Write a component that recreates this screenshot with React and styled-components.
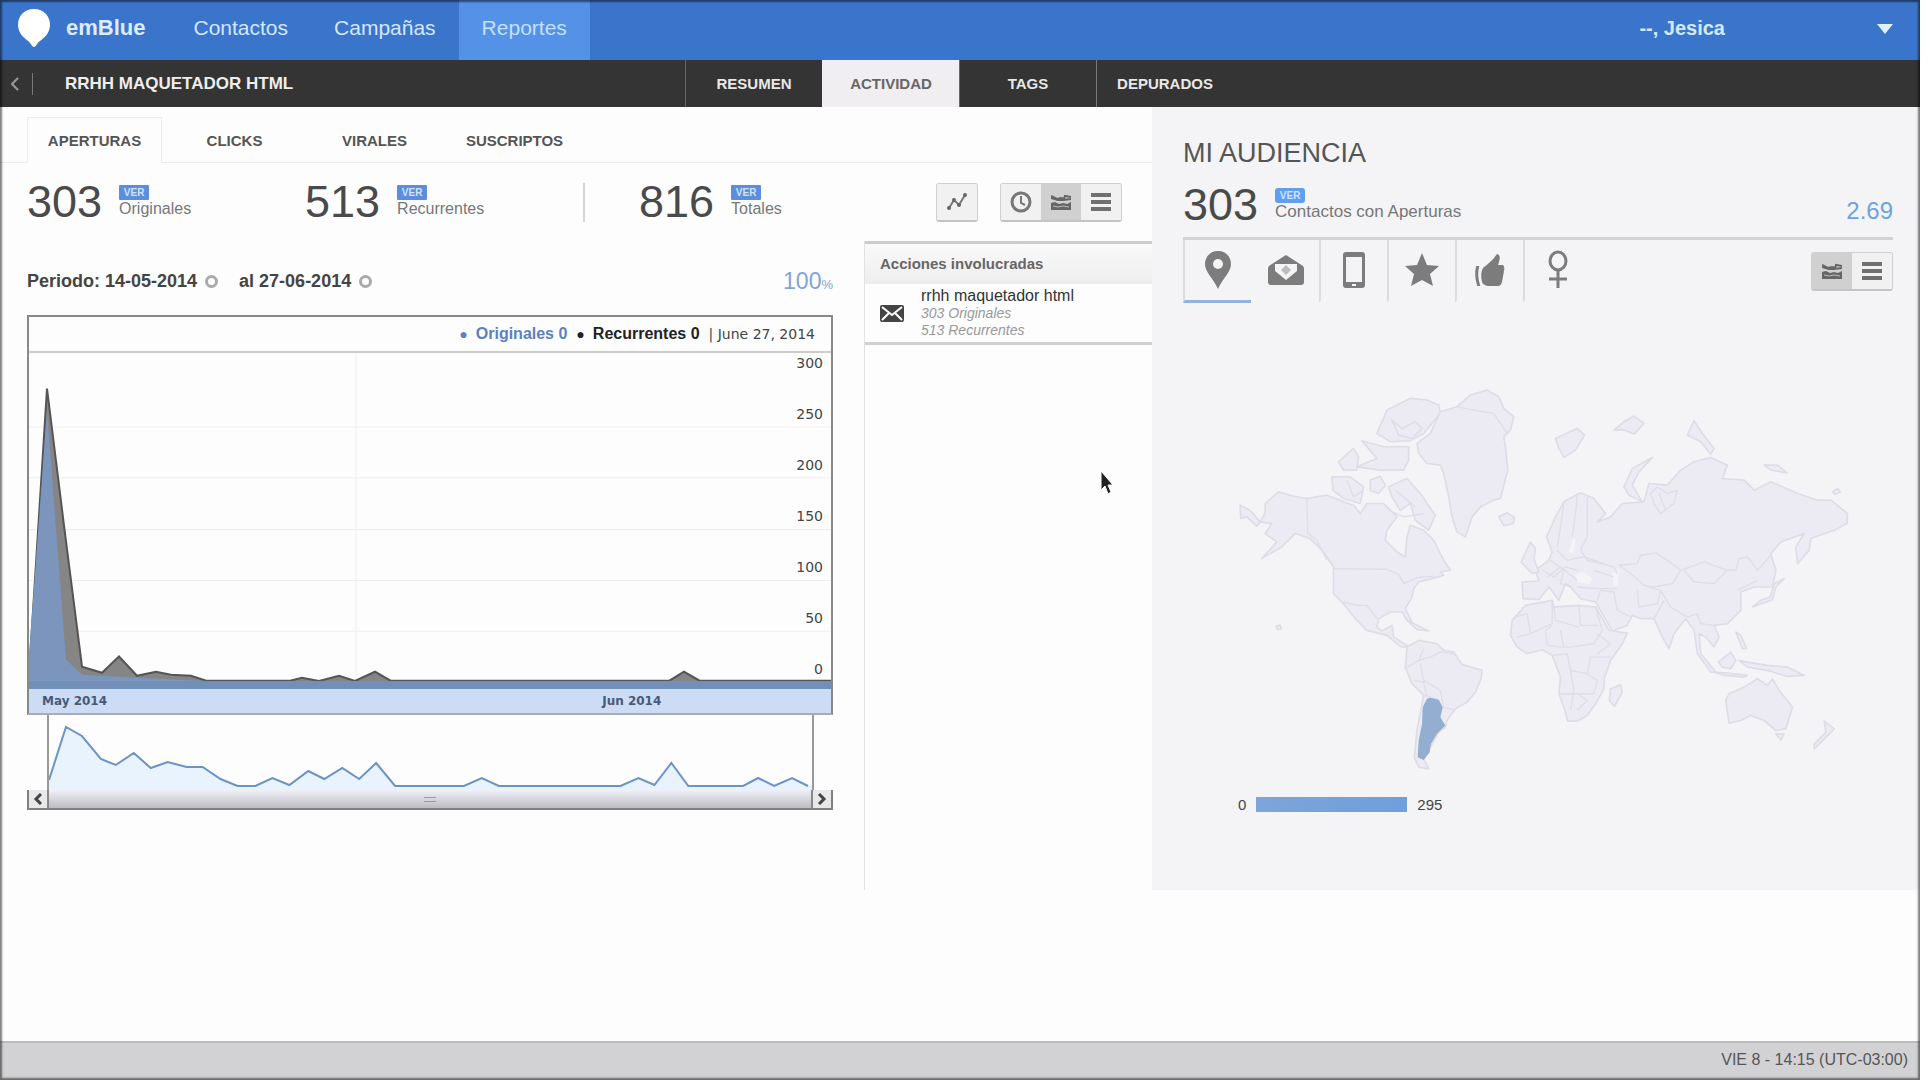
import { useState } from "react";
import styled, { createGlobalStyle } from "styled-components";

const scale = [300, 250, 200, 150, 100, 50, 0];

const sections = ["RESUMEN", "ACTIVIDAD", "TAGS", "DEPURADOS"];
const reports = ["APERTURAS", "CLICKS", "VIRALES", "SUSCRIPTOS"];

const stats = [
  { value: 303, label: "Originales" },
  { value: 513, label: "Recurrentes" },
  { value: 816, label: "Totales", divided: true },
];

function PinLogo() {
  return (
    <svg width="32" height="38" viewBox="0 0 32 38" aria-hidden="true">
      <path
        d="M16 0C6 0 0 7 0 16c0 8 6 13 10 16 3 2 4 6 6 6s3-4 6-6c4-3 10-8 10-16C32 7 26 0 16 0z"
        fill="#fff"
      />
    </svg>
  );
}

function TrendIcon() {
  return (
    <svg width="22" height="20" viewBox="0 0 22 20" aria-hidden="true">
      <path d="M3 16l5-8 5 5 6-10" fill="none" stroke="#777" strokeWidth="2" />
      <g fill="#666">
        <circle cx="3" cy="16" r="2" />
        <circle cx="8" cy="8" r="2" />
        <circle cx="13" cy="13" r="2" />
        <circle cx="19" cy="3" r="2" />
      </g>
    </svg>
  );
}

function ClockIcon() {
  return (
    <svg width="24" height="24" viewBox="0 0 24 24" aria-hidden="true">
      <circle cx="12" cy="12" r="9" fill="none" stroke="#777" strokeWidth="3" />
      <path d="M12 6v7l4 2" fill="none" stroke="#777" strokeWidth="2" />
    </svg>
  );
}

function AreaIcon() {
  return (
    <svg width="20" height="18" viewBox="0 0 20 18" aria-hidden="true">
      <path d="M0 10l4-1 4 2 4-1 4 1 4-2v8H0z" fill="#666" />
      <path
        d="M0 3l6 3 4-1 3 1 1-3 6 1M0 5l7 2h5l8-1"
        fill="none"
        stroke="#666"
        strokeWidth="2"
      />
      <path d="M2 13l5 1 5-1 6 1" fill="none" stroke="#bbb" strokeWidth="1" />
    </svg>
  );
}

function ListIcon() {
  return (
    <svg width="20" height="18" viewBox="0 0 20 18" aria-hidden="true">
      <path d="M0 2h20M0 9h20M0 16h20" stroke="#707070" strokeWidth="4" />
    </svg>
  );
}

function MailIcon() {
  return (
    <svg width="24" height="17" viewBox="0 0 24 17" aria-hidden="true">
      <rect width="24" height="17" rx="2" fill="#444" />
      <path
        d="M2 2l10 8 10-8M2 15l7-7M22 15l-7-7"
        fill="none"
        stroke="#fff"
        strokeWidth="2"
      />
    </svg>
  );
}

const audienceTabs = [
  {
    label: "Ubicación",
    icon: (
      <path
        fillRule="evenodd"
        d="M20 1C12 1 7 7 7 14c0 8 8 14 13 25 5-11 13-17 13-25C33 7 28 1 20 1zm0 8a5 5 0 110 10 5 5 0 010-10z"
      />
    ),
  },
  {
    label: "Correo",
    icon: (
      <>
        <path d="M20 5L37 16q1 1 1 3v13q0 3-3 3H5q-3 0-3-3V19q0-2 1-3z" />
        <path d="M9 14h22v7L20 30 9 21z" fill="#f4f4f6" />
        <path d="M20 15l5 5-5 5-5-5z" fill="#bbb" />
      </>
    ),
  },
  {
    label: "Dispositivo",
    icon: (
      <path
        fillRule="evenodd"
        d="M12 2h16q3 0 3 3v30q0 3-3 3H12q-3 0-3-3V5q0-3 3-3zm0 5v25h16V7zm6 27v2h4v-2z"
      />
    ),
  },
  {
    label: "Favoritos",
    icon: <path d="M20 3l5 12 12 1-9 8 3 12-11-6-11 6 3-12-9-8 12-1z" />,
  },
  {
    label: "Me gusta",
    icon: (
      <>
        <path d="M13 18c5-4 10-8 14-14 4 1 3 6 1 11h5q2 2 1 6l-2 11q-1 4-4 4H18q-5-1-6-4-2-9 1-14z" />
        <path d="M8 17H7q-2 8 1 18h1q-3-9-1-18z" stroke="#7c7c7c" strokeWidth="2" />
      </>
    ),
  },
  {
    label: "Género",
    icon: (
      <g fill="none" stroke="#7c7c7c" strokeWidth="3">
        <ellipse cx="20" cy="11" rx="8" ry="9" />
        <path d="M20 20v18M11 29h18" />
      </g>
    ),
  },
];

function WorldMap() {
  return (
    <MapSvg viewBox="-81 0 2127 1230" role="img" aria-label="Mapa de audiencia">
      <g className="land">
        <path d="M165 400L205 365L250 378L290 385L350 375L400 395L430 405L450 430L470 400L520 400L560 440L530 480L525 510L560 545L585 560L590 500L600 465L640 480L670 510L685 540L700 570L720 600L690 605L700 615L665 625L625 635L610 655L605 680L585 715L605 755L590 750L575 725L540 725L505 745L500 770L515 782L545 765L550 800L590 825L620 835L570 828L530 795L470 780L435 745L400 700L370 670L370 590L340 545L300 505L255 490L215 530L155 565L200 515L165 490L185 460L150 455L165 430Z" />
        <path d="M90 405L110 415L125 425L150 455L140 468L110 440L92 445Z" />
        <path d="M500 190L530 120L600 85L650 90L685 105L690 130L640 190L600 212L540 215Z" />
        <path d="M545 150l30 25l40-20l20 20l-30 30l-40-10z" />
        <path d="M385 275L430 235L445 260L440 300L400 300Z" />
        <path d="M455 212L520 230L595 230L595 270L580 300L510 300L440 290L500 265Z" />
        <path d="M365 320L420 320L460 350L450 400L400 385L368 360Z" />
        <path d="M480 330L510 318L525 345L505 370L480 360Z" />
        <path d="M535 350L590 325L630 370L675 435L655 480L615 450L600 400L570 420L545 380Z" />
        <path d="M620 220L660 190L690 125L740 110L780 75L830 60L865 80L880 115L910 140L900 180L880 200L885 230L892 300L870 385L850 390L810 410L785 440L765 500L740 485L725 440L715 380L700 310L690 285L650 280L625 250Z" />
        <path d="M865 440L890 428L912 442L908 460L880 467Z" />
        <path d="M585 745L620 765L655 782L620 778Z" />
        <path d="M590 830L625 810L680 820L700 840L730 845L755 882L815 900L812 925L795 965L770 995L735 1015L710 1050L705 1070L685 1085L660 1130L640 1165L655 1195L625 1190L612 1160L620 1080L635 1000L640 975L605 940L585 890Z" />
        <path d="M198 768l12-4l4 12l-12 2z" />
      </g>
      <path
        className="active"
        d="M650 985L665 980L685 988L697 1010L690 1040L705 1065L680 1090L662 1120L658 1145L640 1168L622 1160L625 1110L635 1060L637 1010Z"
      />
      <g className="borders">
        <path d="M290 385L292 488L320 510L350 570" />
        <path d="M370 595L530 597L565 612L580 640L620 622L670 618" />
        <path d="M400 695L440 705L470 705L500 745" />
        <path d="M545 425L580 440L640 430M410 330l20 50l30-20M555 360l60 50M740 110l50 10l60 10l40 60" />
        <path d="M640 835L625 870L590 890M625 870L660 860L690 845L730 850M630 880L640 930L690 960L700 1010L735 1020M610 930L640 935L650 980M640 975L680 985" />
      </g>
      <g transform="translate(810 0)">
        <g className="land">
          <path d="M125 635L175 632L165 600L205 570L215 545L198 500L225 440L250 395L300 368L340 385L375 430L350 455L390 440L425 400L490 395L505 340L560 345L600 300L640 275L690 262L740 285L725 325L790 330L820 360L870 335L950 370L1010 390L1050 390L1100 430L1098 460L1060 480L990 505L985 540L950 580L945 530L970 490L900 515L870 550L885 600L875 650L820 650L780 665L780 720L740 760L700 765L715 800L700 830L675 800L655 790L660 850L705 905L690 905L650 850L640 780L615 745L580 790L565 835L545 800L520 745L480 745L455 735L440 765L395 782L365 730L345 695L300 685L270 650L255 640L235 690L205 650L175 688L128 685Z" />
          <path d="M135 705L215 690L220 710L290 705L345 710L385 780L440 788L425 820L390 870L372 920L370 955L345 1000L320 1035L290 1052L262 1052L250 1010L235 970L240 920L215 855L185 838L140 850L110 830L90 795L95 750Z" />
          <path d="M390 955L420 943L425 965L402 1008L386 990Z" />
          <path d="M122 575L150 515L165 535L160 565L175 605L155 610Z" />
          <path d="M225 205L290 175L312 195L285 240L250 262L235 235Z" />
          <path d="M400 180L430 155L460 138L490 160L460 192L430 180Z" />
          <path d="M620 195L640 152L665 190L700 235L690 252L660 215Z" />
          <path d="M430 350L455 295L515 262L475 305L455 345L485 395L445 375Z" />
          <path d="M850 285L890 285L918 308L870 300Z" />
          <path d="M1055 365l15-10l8 10l-15 8z" />
          <path d="M815 710L840 690L868 680L880 640L910 625L885 650L875 688Z" />
          <path d="M765 785L780 795L798 835L785 835Z" />
          <path d="M712 875L750 845L765 870L750 895L725 890Z" />
          <path d="M700 905L740 908L800 915L790 920L730 915Z" />
          <path d="M775 870L800 875L860 885L920 890L970 915L920 918L860 900L800 890Z" />
          <path d="M735 990L745 970L790 950L830 925L860 945L875 925L895 960L935 1010L915 1075L885 1080L850 1050L810 1035L780 1050L745 1058Z" />
          <path d="M885 1090h25l-10 18z" />
          <path d="M1030 1052L1060 1075L1030 1105L1000 1135L1000 1120L1035 1085Z" />
        </g>
        <g className="sea">
          <path d="M285 612L310 605L335 625L325 642L290 635Z" />
          <path d="M275 510L285 500L280 550L265 545Z" />
          <path d="M395 610L415 600L412 640L400 650Z" />
        </g>
        <g className="borders">
          <path d="M250 400L240 470L230 530M290 375L285 430L275 500M320 380L320 500L300 540L320 570L400 590L410 610M310 560L370 580" />
          <path d="M415 585L470 580L480 555L525 548L560 570L600 600L575 640L520 650L490 645L450 610L415 585M600 600L670 575L740 600L700 640L640 635L610 600M740 600L765 600L775 565L800 560L830 600L870 555M770 660L830 630" />
          <path d="M210 570L250 600L240 640L270 650M185 600L220 620L255 590L290 600M230 540L260 570L310 560M200 620l40-30l50 40M290 650L350 655L410 655M340 600L400 620M350 690L360 660L400 665L410 720L450 740M470 660L475 710L530 700L540 660L500 650M540 660L570 710L620 740L650 730L660 760L700 765M520 745L550 690" />
          <path d="M215 690L215 760L150 790M220 710L225 750L295 770M295 705L300 765L350 765M345 710L365 780L340 820L270 830L240 830L200 825L195 780L215 765M240 780L250 830M105 740L140 730L150 790L110 800M215 855L260 850L270 900L320 910L330 860L390 860M320 910L350 930L340 970L290 970L240 970M270 900L280 960L270 1020M290 970L320 990L290 1020M350 790L390 820L350 850" />
          <path d="M510 370l20-20l30 20l30-10l-10 40l-40 30l-20-30zM535 370l20 50" />
        </g>
      </g>
    </MapSvg>
  );
}

function Chart() {
  return (
    <ChartBox>
      <Plot>
        <Legend>
          <LegendItem $color="#5b82bd">
            <span>●</span>Originales 0
          </LegendItem>
          <LegendItem $color="#222">
            <span>●</span>Recurrentes 0
          </LegendItem>
          <span>| June 27, 2014</span>
        </Legend>
        <PlotArea>
          <svg viewBox="30 353 802 331" preserveAspectRatio="none" aria-hidden="true">
            <path
              d="M30 426H832M30 476H832M30 527H832M30 577H832M30 627H832M357 353V684"
              stroke="#efefef"
              fill="none"
            />
            <path
              d="M30 684V670L48 388L65 523L83 662L103 668L120 652L138 671L157 667L172 670L192 671L208 676H290L303 673L320 676L340 671L356 676L376 667L392 676H670L685 667L701 676H832V684Z"
              fill="#858585"
              stroke="#555"
              strokeWidth="2"
            />
            <path
              d="M30 684V650L48 410L67 655L83 670L140 673L208 676H832V684Z"
              fill="#7b95bd"
            />
            <path d="M30 680H832" stroke="#7190b8" strokeWidth="8" />
          </svg>
          <Scale>
            {scale.map((n) => (
              <li key={n}>{n}</li>
            ))}
          </Scale>
        </PlotArea>
        <Months>
          <span>May 2014</span>
          <span>Jun 2014</span>
        </Months>
      </Plot>
      <Overview>
        <svg viewBox="49 708 765 75" preserveAspectRatio="none" aria-hidden="true">
          <path
            d="M49 773L66 720L82 729L101 752L116 758L134 746L151 761L168 755L187 760L203 760L221 772L238 779H256L273 771L290 778L309 764L325 772L343 761L360 772L377 756L396 779H465L483 771L500 779H622L640 771L656 778L673 756L690 779H745L760 771L776 779L794 771L810 779H814V783H49Z"
            fill="#e8f3fe"
          />
          <path
            d="M49 773L66 720L82 729L101 752L116 758L134 746L151 761L168 755L187 760L203 760L221 772L238 779H256L273 771L290 778L309 764L325 772L343 761L360 772L377 756L396 779H465L483 771L500 779H622L640 771L656 778L673 756L690 779H745L760 771L776 779L794 771L810 779"
            fill="none"
            stroke="#6b93c4"
            strokeWidth="2"
          />
        </svg>
      </Overview>
      <ScrollBar>
        <button type="button" aria-label="Anterior">
          <svg width="10" height="12" viewBox="0 0 10 12">
            <path d="M8 1L3 6l5 5" fill="none" stroke="#444" strokeWidth="3" />
          </svg>
        </button>
        <div className="thumb">
          <i />
        </div>
        <button type="button" aria-label="Siguiente">
          <svg width="10" height="12" viewBox="0 0 10 12">
            <path d="M2 1l5 5-5 5" fill="none" stroke="#444" strokeWidth="3" />
          </svg>
        </button>
      </ScrollBar>
    </ChartBox>
  );
}

function App() {
  const [section, setSection] = useState("ACTIVIDAD");
  const [report, setReport] = useState("APERTURAS");
  const [audience, setAudience] = useState("Ubicación");

  return (
    <Page>
      <GlobalStyle />
      <TopBar>
        <Brand href="#">
          <PinLogo />
          emBlue
        </Brand>
        <NavLink href="#">Contactos</NavLink>
        <NavLink href="#">Campañas</NavLink>
        <NavLink href="#" $active>
          Reportes
        </NavLink>
        <UserMenu type="button">
          --, Jesica
          <svg width="16" height="10" viewBox="0 0 16 10" aria-hidden="true">
            <path d="M0 0h16L8 10z" fill="#e3f1ff" />
          </svg>
        </UserMenu>
      </TopBar>

      <SectionBar>
        <Back type="button" aria-label="Volver">
          <svg width="8" height="14" viewBox="0 0 8 14">
            <path d="M7 1L1 7l6 6" fill="none" stroke="#999" strokeWidth="2" />
          </svg>
        </Back>
        <h1>RRHH MAQUETADOR HTML</h1>
        {sections.map((name) => (
          <SectionTab
            key={name}
            type="button"
            $active={name === section}
            onClick={() => setSection(name)}
          >
            {name}
          </SectionTab>
        ))}
      </SectionBar>

      <Content>
        <Activity>
          <ReportTabs>
            {reports.map((name) => (
              <ReportTab
                key={name}
                type="button"
                $active={name === report}
                onClick={() => setReport(name)}
              >
                {name}
              </ReportTab>
            ))}
          </ReportTabs>

          <StatsRow>
            {stats.map((s) => (
              <Stat key={s.label} $divided={s.divided}>
                <BigNumber>{s.value}</BigNumber>
                <StatText>
                  <Badge href="#">VER</Badge>
                  {s.label}
                </StatText>
              </Stat>
            ))}
            <Tools>
              <ButtonGroup>
                <button type="button" aria-label="Tendencia">
                  <TrendIcon />
                </button>
              </ButtonGroup>
              <ButtonGroup>
                <button type="button" aria-label="Horario">
                  <ClockIcon />
                </button>
                <button type="button" aria-label="Gráfico" aria-pressed="true">
                  <AreaIcon />
                </button>
                <button type="button" aria-label="Lista">
                  <ListIcon />
                </button>
              </ButtonGroup>
            </Tools>
          </StatsRow>

          <Columns>
            <ChartColumn>
              <Period>
                Periodo: 14-05-2014
                <button type="button" aria-label="Cambiar fecha de inicio" />
                <span>al 27-06-2014</span>
                <button type="button" aria-label="Cambiar fecha de fin" />
                <Percent>
                  100<small>%</small>
                </Percent>
              </Period>
              <Chart />
            </ChartColumn>
            <Actions>
              <h2>Acciones involucradas</h2>
              <ActionItem>
                <MailIcon />
                <div>
                  <p>rrhh maquetador html</p>
                  <em>303 Originales</em>
                  <em>513 Recurrentes</em>
                </div>
              </ActionItem>
            </Actions>
          </Columns>
        </Activity>

        <Audience>
          <h2>MI AUDIENCIA</h2>
          <AudienceStat>
            <BigNumber>303</BigNumber>
            <StatText $large>
              <Badge href="#" $bubble>
                VER
              </Badge>
              Contactos con Aperturas
            </StatText>
            <Ratio>2.69</Ratio>
          </AudienceStat>
          <AudienceBar>
            {audienceTabs.map((tab) => (
              <AudienceTab
                key={tab.label}
                type="button"
                aria-label={tab.label}
                $active={tab.label === audience}
                onClick={() => setAudience(tab.label)}
              >
                <svg width="40" height="40" viewBox="0 0 40 40" fill="#7c7c7c">
                  {tab.icon}
                </svg>
              </AudienceTab>
            ))}
            <ButtonGroup $end>
              <button type="button" aria-label="Gráfico" aria-pressed="true">
                <AreaIcon />
              </button>
              <button type="button" aria-label="Lista">
                <ListIcon />
              </button>
            </ButtonGroup>
          </AudienceBar>
          <WorldMap />
          <MapLegend>
            <span>0</span>
            <i />
            <span>295</span>
          </MapLegend>
        </Audience>
      </Content>

      <Footer>VIE 8 - 14:15 (UTC-03:00)</Footer>

      <Cursor viewBox="0 0 14 26" width="14" height="26" aria-hidden="true">
        <path
          d="M1 1v19l4-4 3 8 3-2-3-7h5z"
          fill="#222"
          stroke="#fff"
          strokeWidth="1"
        />
      </Cursor>
    </Page>
  );
}

export default App;

const GlobalStyle = createGlobalStyle`
  * {
    box-sizing: border-box;
  }

  body {
    margin: 0;
    background: #fff;
    font-family: "Liberation Sans", Arial, sans-serif;
    color: #444;
  }

  h1, h2, p, ul {
    margin: 0;
    padding: 0;
  }

  button {
    margin: 0;
    padding: 0;
    border: 0;
    background: none;
    font-family: inherit;
    cursor: pointer;
  }

  a {
    text-decoration: none;
  }

  svg {
    display: block;
  }
`;

const Page = styled.div`
  position: relative;
  display: flex;
  flex-direction: column;
  min-height: 100vh;
  margin-right: 10px;
  background: #fdfdfe;

  /* dark edge drawn over the whole window */
  &::after {
    content: "";
    position: absolute;
    inset: 0;
    box-shadow: inset 0 0 2px 2px rgba(0, 0, 0, 0.5);
    pointer-events: none;
  }
`;

const TopBar = styled.header`
  display: flex;
  height: 60px;
  padding: 0 27px 0 18px;
  background: #3a75cb;
`;

const Brand = styled.a`
  display: flex;
  align-items: center;
  gap: 16px;
  padding: 0 25px 5px 0;
  color: #dcecff;
  font-size: 22px;
  font-weight: bold;
`;

const NavLink = styled.a`
  display: flex;
  align-items: center;
  padding: 0 23px 5px;
  color: ${({ $active }) => ($active ? "#c4e0ff" : "#d4e7fd")};
  background: ${({ $active }) => ($active ? "#5591e6" : "none")};
  font-size: 21px;
`;

const UserMenu = styled.button`
  display: flex;
  align-items: center;
  gap: 152px;
  margin-left: auto;
  padding-bottom: 3px;
  color: #d4e9ff;
  font-size: 20px;
  font-weight: bold;
`;

const SectionBar = styled.nav`
  display: flex;
  height: 47px;
  background: #343434;

  h1 {
    width: 652px;
    padding-left: 32px;
    color: #eee;
    font-size: 17px;
    line-height: 47px;
  }
`;

const Back = styled.button`
  display: flex;
  align-items: center;
  align-self: center;
  width: 33px;
  height: 22px;
  padding-left: 11px;
  border-right: 1px solid #777;
`;

const SectionTab = styled.button`
  width: 137px;
  border-left: 1px solid #666;
  color: #e8e8e8;
  font-size: 15px;
  font-weight: bold;

  &:last-child {
    border-left-color: #777;
  }

  ${({ $active }) =>
    $active &&
    `
    background: #f0eef0;
    color: #666;
    border-left-color: #f0eef0;
  `}
`;

const Content = styled.main`
  display: flex;
`;

const Activity = styled.section`
  display: flex;
  flex-direction: column;
  width: 60%;
`;

const ReportTabs = styled.div`
  display: flex;
  gap: 5px;
  padding: 10px 0 0 27px;
  border-bottom: 1px solid #ececee;
`;

const ReportTab = styled.button`
  width: 135px;
  height: 46px;
  margin-bottom: -1px;
  border: 1px solid ${({ $active }) => ($active ? "#ececee" : "transparent")};
  border-bottom-color: ${({ $active }) => ($active ? "#fdfdfe" : "transparent")};
  color: #555;
  font-size: 15px;
  font-weight: bold;
`;

const StatsRow = styled.div`
  display: flex;
  align-items: center;
  height: 78px;
  padding: 0 30px 0 27px;
`;

const Stat = styled.div`
  display: flex;
  align-items: center;
  gap: 17px;
  width: 278px;
  height: 39px;

  ${({ $divided }) =>
    $divided &&
    `
    width: auto;
    padding-left: 54px;
    border-left: 2px solid #d5d5d5;
  `}
`;

const BigNumber = styled.strong`
  color: #4a4a4a;
  font-size: 45px;
  font-weight: normal;
  line-height: 40px;
`;

const StatText = styled.div`
  display: flex;
  flex-direction: column;
  align-items: flex-start;
  padding-bottom: 1px;
  color: #777;
  font-size: ${({ $large }) => ($large ? "17px" : "16px")};
  line-height: 18px;
`;

const Badge = styled.a`
  width: 30px;
  height: 15px;
  border-radius: ${({ $bubble }) => ($bubble ? "3px" : "1px")};
  background: ${({ $bubble }) => ($bubble ? "#5f9fee" : "#5b8edd")};
  color: #cfe3ff;
  font-size: 10px;
  font-weight: bold;
  line-height: 15px;
  text-align: center;
`;

const Tools = styled.div`
  display: flex;
  gap: 22px;
  margin-left: auto;
`;

const ButtonGroup = styled.div`
  display: flex;
  align-items: stretch;
  height: 39px;
  border: 1px solid #cfcfcf;
  border-bottom: 2px solid #c4c4c4;
  border-radius: 3px;
  overflow: hidden;
  ${({ $end }) => $end && "margin: 12px 0 0 auto;"}

  button {
    display: flex;
    align-items: center;
    justify-content: center;
    width: 40px;
    background: #f1f1f2;
  }

  button[aria-pressed="true"] {
    background: #d0d0d1;
  }
`;

const Columns = styled.div`
  display: flex;
  flex: 1;
`;

const ChartColumn = styled.div`
  flex: 1;
  padding: 0 31px 80px 27px;
`;

const Period = styled.div`
  display: flex;
  align-items: center;
  height: 74px;
  padding-top: 6px;
  font-size: 18px;
  font-weight: bold;

  button {
    width: 13px;
    height: 13px;
    margin: 0 21px 0 8px;
    border: 3px solid #aaa;
    border-radius: 50%;
  }
`;

const Percent = styled.span`
  margin-left: auto;
  color: #7da5da;
  font-size: 23px;
  font-weight: normal;

  small {
    font-size: 13px;
  }
`;

const ChartBox = styled.div`
  font-family: "DejaVu Sans", Verdana, sans-serif;
`;

const Plot = styled.div`
  border: 2px solid #888;
  border-bottom-color: #aab;
`;

const Legend = styled.div`
  display: flex;
  align-items: center;
  justify-content: flex-end;
  gap: 9px;
  height: 36px;
  padding-right: 16px;
  border-bottom: 2px solid #ccc;
  color: #444;
  font-size: 14px;
`;

const LegendItem = styled.b`
  display: flex;
  align-items: center;
  gap: 8px;
  color: ${({ $color }) => $color};
  font-family: "Liberation Sans", Arial, sans-serif;
  font-size: 16px;

  span {
    font-size: 14px;
  }
`;

const PlotArea = styled.div`
  position: relative;

  svg {
    width: 100%;
    height: 336px;
  }
`;

/* axis values float over the right end of the plot */
const Scale = styled.ul`
  position: absolute;
  top: 0;
  right: 8px;
  display: flex;
  flex-direction: column;
  justify-content: space-between;
  height: 326px;
  list-style: none;
  color: #444;
  font-size: 14px;
  line-height: 20px;
  text-align: right;
`;

const Months = styled.div`
  display: grid;
  grid-template-columns: 71% 29%;
  padding-left: 13px;
  background: #cddcf5;
  color: #47597a;
  font-size: 12px;
  font-weight: bold;
  line-height: 24px;
`;

const Overview = styled.div`
  margin: 0 19px 0 20px;
  border: solid #999;
  border-width: 0 2px;

  svg {
    width: 100%;
    height: 75px;
  }
`;

const ScrollBar = styled.div`
  display: flex;
  height: 20px;
  border: solid #808080;
  border-width: 0 2px 2px;

  button {
    display: flex;
    align-items: center;
    justify-content: center;
    width: 18px;
    background: #e8e8ea;
  }

  .thumb {
    display: flex;
    flex: 1;
    align-items: center;
    justify-content: center;
    border: solid #888;
    border-width: 0 2px;
    background: linear-gradient(#f0f0f8, #bcbcc2);
  }

  .thumb i {
    width: 12px;
    height: 5px;
    border: solid #999;
    border-width: 1px 0;
  }
`;

const Actions = styled.aside`
  width: 25%;
  border-left: 1px solid #e2e2e4;

  h2 {
    padding-left: 15px;
    border-top: 3px solid #ccc;
    background: linear-gradient(#fafafb, #ededee);
    color: #666;
    font-size: 15px;
    line-height: 40px;
  }
`;

const ActionItem = styled.div`
  display: flex;
  align-items: center;
  gap: 17px;
  padding: 3px 0 3px 15px;
  border-bottom: 3px solid #d0d0d0;

  p {
    color: #333;
    font-size: 16px;
    line-height: 18px;
  }

  em {
    display: block;
    color: #999;
    font-size: 14px;
    line-height: 17px;
  }
`;

const Audience = styled.section`
  width: 40%;
  padding: 26px 27px 0 31px;
  background: #f4f4f7;

  h2 {
    color: #555;
    font-size: 27px;
    font-weight: normal;
    line-height: 40px;
  }
`;

const AudienceStat = styled.div`
  display: flex;
  align-items: center;
  gap: 17px;
  height: 67px;
  border-bottom: 3px solid #d2d2d2;
`;

const Ratio = styled.span`
  margin-left: auto;
  padding-top: 12px;
  color: #6ea2dc;
  font-size: 24px;
`;

const AudienceBar = styled.div`
  display: flex;
  align-items: flex-start;
  height: 63px;
`;

const AudienceTab = styled.button`
  display: flex;
  align-items: center;
  justify-content: center;
  width: 68px;
  height: 63px;
  border-left: 2px solid #dcdcde;
  border-bottom: 3px solid ${({ $active }) => ($active ? "#8fb4e2" : "transparent")};

  &:nth-child(2) {
    border-left-color: transparent;
  }
`;

const MapSvg = styled.svg`
  width: 100%;
  margin-top: 67px;

  .land {
    fill: #ecebf4;
    stroke: #dedde6;
    stroke-width: 5;
    stroke-linejoin: round;
  }

  .sea {
    fill: #f4f4f7;
  }

  .borders {
    fill: none;
    stroke: #dedde8;
    stroke-width: 4;
    stroke-linejoin: round;
  }

  .active {
    fill: #94aed2;
  }
`;

const MapLegend = styled.div`
  display: flex;
  align-items: center;
  gap: 10px;
  padding: 15px 0 75px 55px;
  color: #444;
  font-size: 15px;
  line-height: 18px;

  i {
    width: 151px;
    height: 15px;
    background: linear-gradient(90deg, #7da5d8, #6f9fdc);
  }
`;

const Footer = styled.footer`
  height: 39px;
  margin-top: auto;
  padding-right: 12px;
  border-top: 2px solid #bbb;
  background: #d2d2d4;
  color: #555;
  font-size: 16px;
  line-height: 34px;
  text-align: right;
`;

const Cursor = styled.svg`
  position: absolute;
  top: 470px;
  left: 1100px;
`;
